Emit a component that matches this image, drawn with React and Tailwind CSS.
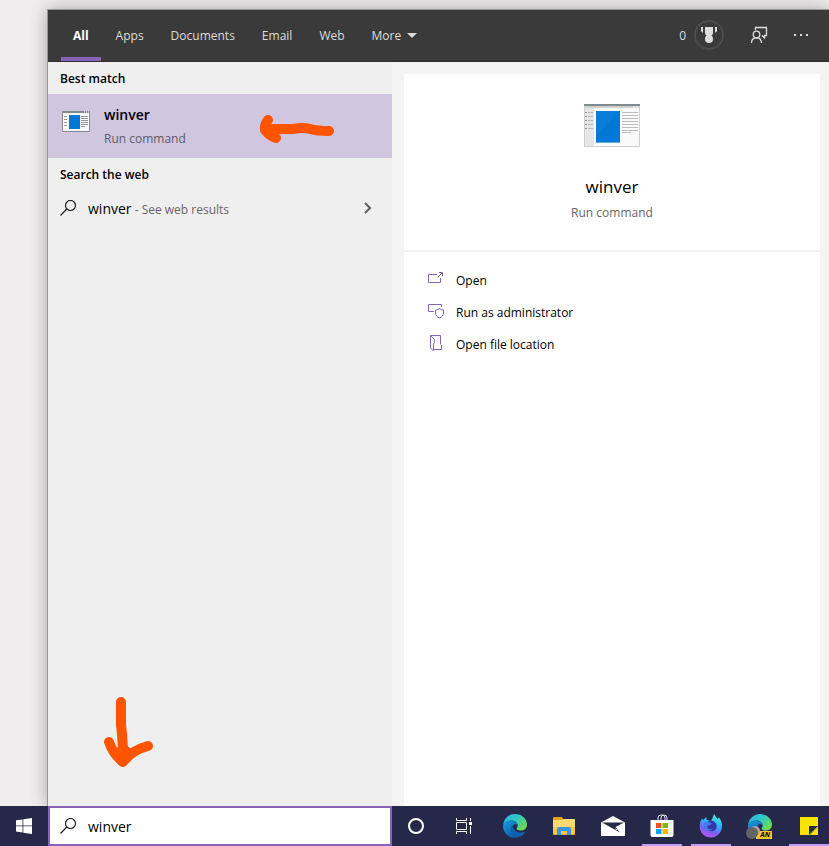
import React, { useState } from 'react';

const tabs = ['All', 'Apps', 'Documents', 'Email', 'Web'];

// Small application window, used for the preview
const AppIcon = () => (
  <svg viewBox="0 0 56 43" className="w-14 h-[43px] shrink-0" aria-hidden="true">
    <rect width="56" height="43" fill="#cfd1d1" />
    <rect x="1" y="4" width="54" height="38" fill="#fafafa" />
    <rect x="1" y="4" width="9" height="38" fill="#e6e6e6" />
    <rect width="56" height="2" fill="#7f8a8c" />
    <path d="M49 2h2v2h-2zM52 2h2v2h-2z" fill="#e5e5e5" />
    <path d="M4 8.5h5M4 12.5h5M4 16.5h5M4 20.5h5M4 24.5h5" stroke="#bdbdbd" />
    <path d="M1 8.5h2M1 12.5h2M1 16.5h2M1 20.5h2M1 24.5h2" stroke="#969696" />
    <rect x="12" y="7" width="24" height="32" fill="#0078d7" />
    <path d="M12 7h24L12 31z" fill="#0a7dd9" />
    <path d="M12 38.5h24" stroke="#67afe5" />
    <path d="M38 8.5h16M38 11.5h16M38 14.5h16M38 17.5h16M38 20.5h16M38 23.5h16M38 26.5h16M38 28.5h9" stroke="#bdbdbd" />
  </svg>
);

const SmallAppIcon = () => (
  <svg viewBox="0 0 28 21" className="w-7 h-[21px] shrink-0" aria-hidden="true">
    <rect width="28" height="21" fill="#858991" />
    <rect x="1" y="2" width="26" height="18" fill="#fafafa" />
    <path d="M22 1h1M24 1h1M26 1h1" stroke="#fff" />
    <path d="M2 5.5h3M2 8.5h3M2 11.5h3M2 14.5h3" stroke="#969696" />
    <rect x="7" y="4" width="11" height="14" fill="#0078d7" />
    <path d="M19 5.5h7M19 7.5h7M19 9.5h7M19 11.5h7M19 13.5h7M19 15.5h4" stroke="#969696" />
  </svg>
);

const SearchIcon = () => (
  <svg viewBox="0 0 16 16" className="w-4 h-4 shrink-0" fill="none" stroke="#222" strokeWidth="1.2" aria-hidden="true">
    <circle cx="10.5" cy="5.5" r="5" />
    <path d="M6.8 9 .5 15.5" />
  </svg>
);

const OpenIcon = () => (
  <svg viewBox="0 0 16 16" className="w-4 h-4" fill="none" stroke="#8764b8" aria-hidden="true">
    <path d="M9 3.5H.5v8h12V7" />
    <path d="m10 6 4.5-4.5M11 1.5h3.5V5" />
  </svg>
);

const AdminIcon = () => (
  <svg viewBox="0 0 16 16" className="w-4 h-4" fill="none" stroke="#8764b8" aria-hidden="true">
    <path d="M6 8.5H.5v-7h13V4" />
    <path d="M11.5 5.5c-1 1-2.500 1.500-4 1.500v3c0 2.500 1.500 4 4 5 2.500-1 4-2.500 4-5V7c-1.500 0-3-.5-4-1.500z" />
  </svg>
);

const FolderIcon = () => (
  <svg viewBox="0 0 16 16" className="w-4 h-4" fill="none" stroke="#8764b8" aria-hidden="true">
    <path d="M2.5.5h10v9l1 1v4H5.5" />
    <path d="M2.5.5v13l3 2V9l.8-1.500V4z" />
  </svg>
);

const actions = [
  { label: 'Open', icon: <OpenIcon /> },
  { label: 'Run as administrator', icon: <AdminIcon /> },
  { label: 'Open file location', icon: <FolderIcon /> },
];

const EdgeIcon = () => (
  <svg viewBox="0 0 24 24" className="w-6 h-6" aria-hidden="true">
    <defs>
      <linearGradient id="edge-top" x1="0" y1="0" x2="1" y2=".7">
        <stop offset="0" stopColor="#2bb5e8" />
        <stop offset=".5" stopColor="#2fc8c5" />
        <stop offset="1" stopColor="#6ddb4c" />
      </linearGradient>
      <linearGradient id="edge-low" x1="0" y1="0" x2=".6" y2="1">
        <stop offset="0" stopColor="#1b9de2" />
        <stop offset="1" stopColor="#0c59a4" />
      </linearGradient>
    </defs>
    <path d="M.2 10.5C1 4.5 6 0 12 0c7 0 12 5 12 10.5 0 4-3 6-6.500 6-2.500 0-4-1-4-2 0-.8 1.200-1.300 1.200-3C14.700 9 12 6.500 8.500 6.500 5 6.500 1.500 8 .2 10.500z" fill="url(#edge-top)" />
    <path d="M.1 11C1 8 4.500 6.300 8.300 6.500c3.500.2 6.200 2.400 6.400 4.800-.8-1-2-1.300-3-1C9 11 8 13.500 8.500 16c.7 4 4 6.500 7.500 7.300C14.500 23.800 13.300 24 12 24 5 24-.5 18 .1 11z" fill="url(#edge-low)" />
    <path d="M11.700 10.300C9 11 7.700 13.500 8 16c.5 4.500 5 7.500 9 6.800 2.500-1 4.500-3 5.500-4.800.2-.5-.2-.8-.6-.5-1.900 1-4.200 1.300-6.200.8-3.500-.8-5.900-3.800-5.500-6 .2-1 .7-1.500 1.500-2z" fill="#1261b0" />
  </svg>
);

const ExplorerIcon = () => (
  <svg viewBox="0 0 22 18" className="w-[22px] h-[18px]" aria-hidden="true">
    <path d="M0 1q0-1 1-1h8l1 2h11q1 0 1 1v15H0z" fill="#e5a11b" />
    <path d="M0 3h9l1-1h11q1 0 1 1v14H0z" fill="#ffd974" />
    <path d="M0 10h22v7H0z" fill="#f8c94e" />
    <path d="M4 18v-6q0-2 2-2h10q2 0 2 2v6h-4v-4H8v4z" fill="#3b97df" />
  </svg>
);

const MailIcon = () => (
  <svg viewBox="0 0 24 20" className="w-6 h-5" aria-hidden="true">
    <path d="M0 6.5 12 0l12 6.5V20H0z" fill="#fff" />
    <path d="M1 6.5h22L14.500 11l4.500 5.500z" fill="#252849" />
    <path d="m14 12.500 3 1-2 .5z" fill="#fff" />
  </svg>
);

const StoreIcon = () => (
  <svg viewBox="0 0 24 24" className="w-6 h-6" aria-hidden="true">
    <path d="M8 7V4q0-3 3-3h1q3 0 3 3v3M11 7V4q0-3 3-3 3 0 3 3v3" fill="none" stroke="#dfe3ee" />
    <path d="M.5 6h23v15q0 2-2 2h-19q-2 0-2-2z" fill="#fff" />
    <path d="M6 9h5.500v5H6z" fill="#f25022" />
    <path d="M12.500 9H18v5h-5.500z" fill="#7fba00" />
    <path d="M6 15h5.500v5H6z" fill="#00a4ef" />
    <path d="M12.500 15H18v5h-5.500z" fill="#ffb900" />
  </svg>
);

const FirefoxIcon = () => (
  <svg viewBox="0 0 24 24" className="w-6 h-6" aria-hidden="true">
    <defs>
      <linearGradient id="fox" x1=".8" y1="0" x2=".4" y2="1">
        <stop offset="0" stopColor="#50f0c8" />
        <stop offset=".4" stopColor="#26b8f5" />
        <stop offset=".75" stopColor="#7b5df8" />
        <stop offset="1" stopColor="#b65bea" />
      </linearGradient>
    </defs>
    <path d="M3 4.500 4.500 6 7 3l1 3 4 1 1.500-3L15 0l3.500 5L20 3.500c2 2.500 3.500 6 3 9.500-.7 6-5 10.500-11 10.500S1 19 .7 13C.5 9.500 1.500 6.500 3 4.500z" fill="url(#fox)" />
    <path d="M7 10c1-3 5-4 8-2.500 3.500 2 3.500 7 .5 9-3 1.800-7 .5-8-2.500z" fill="#3438a5" />
    <path d="M5 9q3-2 8 .5l-2 1.500q-1 1-3 1c0 3 3 4 5.500 2.500-2 3.500-7 2.500-8.500-1z" fill="#4578e8" />
  </svg>
);

// Edge Canary carries a profile badge over its lower left corner
const EdgeCanaryIcon = () => (
  <div className="relative">
    <EdgeIcon />
    <span className="absolute left-2 top-[17px] h-2 w-4 bg-[#f9c22e] pr-0.5 text-right text-[7px] leading-2 font-bold text-black italic">AN</span>
    <span className="absolute left-0.5 top-3 size-[10px] rounded-full bg-[#b7a19c]"></span>
    <span className="absolute -left-0.5 top-[13px] size-3 rounded-full bg-[#626566]"></span>
  </div>
);

const NotesIcon = () => (
  <svg viewBox="0 0 18 18" className="w-[18px] h-[18px]" aria-hidden="true">
    <path d="M0 0h18v18H0z" fill="#ffe300" />
    <path d="M9 9h9v9H9z" fill="#252849" />
    <path d="M18 9v1l-8 8H9z" fill="#ffe300" />
    <path d="M18 10v8h-8z" fill="#ffe300" />
  </svg>
);

const pinned = [
  { name: 'Edge', icon: <EdgeIcon /> },
  { name: 'File Explorer', icon: <ExplorerIcon /> },
  { name: 'Mail', icon: <MailIcon /> },
  { name: 'Store', icon: <StoreIcon />, open: true },
  { name: 'Firefox', icon: <FirefoxIcon />, open: true },
  { name: 'Edge Canary', icon: <EdgeCanaryIcon /> },
  { name: 'Sticky Notes', icon: <NotesIcon />, open: true },
];

const Header = () => {
  const [active, setActive] = useState('All');

  return (
    <header className="flex h-13 shrink-0 items-stretch justify-between bg-[#3a3a3a] border-b border-[#302c31] text-[#dcdcdc]">
      <nav className="flex gap-[3px] pl-[13px]">
        {tabs.map((tab) => (
          <button
            key={tab}
            onClick={() => setActive(tab)}
            className={`border-b-4 px-3 pt-1 ${
              active === tab ? 'border-[#8764b8] font-bold text-white' : 'border-transparent'
            }`}
          >
            {tab}
          </button>
        ))}
        <button className="flex items-center gap-1.5 px-3">
          More
          <svg viewBox="0 0 10 5" className="w-2.5 h-[5px]" fill="currentColor" aria-hidden="true">
            <path d="M0 0h10L5 5z" />
          </svg>
        </button>
      </nav>

      <div className="flex items-center pr-[21px] pb-0.5">
        <span className="pr-2 pt-0.5">0</span>
        <button aria-label="Rewards" className="mr-[26px] flex size-[30px] items-center justify-center rounded-full border-2 border-[#4c4c4c]">
          <svg viewBox="0 0 16 17" className="w-4 h-[17px] shrink-0" fill="#dedede" aria-hidden="true">
            <path d="M4 1h8v6q0 2-2 3H6Q4 9 4 7z" />
            <circle cx="8" cy="13" r="4" />
            <path d="M0 1h2v6L0 5zM14 1h2v4l-2 2z" />
          </svg>
        </button>
        <button aria-label="Feedback" className="mr-[26px]">
          <svg viewBox="0 0 18 18" className="w-[18px] h-[18px]" fill="none" stroke="#dedede" strokeWidth="1.3" aria-hidden="true">
            <path d="M5.500 4V1.500h11v8h-2v2.500L12 9.500" />
            <circle cx="6.500" cy="8.500" r="3.300" />
            <path d="M1.500 17c0-3.500 2-5.200 5-5.200s5 1.700 5 5.200" />
          </svg>
        </button>
        <button aria-label="Options">
          <svg viewBox="0 0 14 4" className="w-3.5 h-1" fill="#dedede" aria-hidden="true">
            <path d="M0 1h2v2H0zM6 1h2v2H6zM12 1h2v2h-2z" />
          </svg>
        </button>
      </div>
    </header>
  );
};

const Results = () => (
  <section className="relative flex w-86 shrink-0 flex-col bg-[#efefef]">
    <h2 className="h-8 pl-3 pt-px leading-8 font-semibold">Best match</h2>
    <button className="flex h-16 items-start bg-[#d0c6df] pl-3.5 pt-[11px] text-left">
      <span className="pt-1.5">
        <SmallAppIcon />
      </span>
      <span className="pl-3.5">
        <span className="block text-[14px] leading-5 font-semibold">winver</span>
        <span className="block pt-1 leading-5 text-[#5f5a66]">Run command</span>
      </span>
    </button>
    <h2 className="h-8 pl-3 pt-px leading-8 font-semibold">Search the web</h2>
    <button className="flex h-10 items-center pl-3 pr-5 pb-1 text-left">
      <SearchIcon />
      <span className="flex-1 pl-3">
        <span className="text-[14px]">winver</span>
        <span className="text-[#666]"> - See web results</span>
      </span>
      <svg viewBox="0 0 8 12" className="w-2 h-3" fill="none" stroke="#5d5d5d" strokeWidth="2" aria-hidden="true">
        <path d="m1 1 5 5-5 5" />
      </svg>
    </button>

    {/* Hand-drawn arrows */}
    <svg viewBox="0 0 76 32" className="absolute left-[211px] top-[50px] w-19 h-8" fill="none" stroke="#ff5500" strokeWidth="10" strokeLinecap="round" strokeLinejoin="round" aria-hidden="true">
      <path d="M70 19Q58 19 51 17 44 15 34 17H8M9 8Q5 13 6 18q5 6 11 8" />
      <path d="M8 16h9v8z" fill="#ff5500" strokeWidth="2" />
    </svg>
    <svg viewBox="0 0 52 72" className="absolute bottom-[38px] left-[55px] w-13 h-18" fill="none" stroke="#ff5500" strokeWidth="10" strokeLinecap="round" strokeLinejoin="round" aria-hidden="true">
      <path d="M18 6v23q2 15 2 34M6 46q4 12 14 20Q29 54 45 50" />
      <path d="m12 54 8 11 10-9-8-7z" fill="#ff5500" strokeWidth="2" />
    </svg>
  </section>
);

const Preview = () => (
  <section className="ml-3 mr-[9px] mt-3 flex flex-1 flex-col bg-white">
    <div className="flex h-[178px] flex-col items-center border-b-2 border-[#f2f2f2] pt-[30px]">
      <AppIcon />
      <h1 className="pt-7 text-[17px] leading-6">winver</h1>
      <p className="pt-1 leading-5 text-[#666]">Run command</p>
    </div>
    <ul className="pt-3">
      {actions.map((action) => (
        <li key={action.label}>
          <button className="flex h-8 w-full items-center pl-6 text-left">
            <span className="pb-0.5">{action.icon}</span>
            <span className="pl-3 pt-0.5">{action.label}</span>
          </button>
        </li>
      ))}
    </ul>
  </section>
);

const Taskbar = () => {
  const [query, setQuery] = useState('winver');

  return (
    <footer className="relative flex h-10 shrink-0 bg-[#252849]">
      <button aria-label="Start" className="flex w-12 items-center justify-center">
        <svg viewBox="0 0 16 16" className="w-4 h-4" fill="#fff" aria-hidden="true">
          <path d="M0 2.300 6.500 1.400V7.500H0zM7.300 1.300 16 0v7.500H7.300zM0 8.300h6.500v6.200L0 13.600zM7.300 8.300H16V16l-8.700-1.300z" />
        </svg>
      </button>
      <label className="flex w-86 items-center border-2 border-[#8764b8] bg-white pl-2.5">
        <SearchIcon />
        <input
          type="text"
          aria-label="Search"
          value={query}
          onChange={(e) => setQuery(e.target.value)}
          className="ml-3 min-w-0 flex-1 text-[14px] text-black outline-none"
        />
      </label>
      <button aria-label="Cortana" className="flex w-12 items-center justify-center">
        <span className="size-4 rounded-full border-2 border-white"></span>
      </button>
      <button aria-label="Task view" className="mr-[7px] flex w-12 items-center justify-center">
        <svg viewBox="0 0 16 16" className="w-4 h-4" fill="none" stroke="#fff" aria-hidden="true">
          <path d="M.5 0v2.500h10V0M.5 4.500h10v7H.5zM.5 16v-2.500h10V16M14.500 0v3M14.500 8v8" />
          <path d="M13 4h3v3h-3z" fill="#fff" stroke="none" />
        </svg>
      </button>
      <div className="flex gap-[9px]">
        {pinned.map((app) => (
          <button
            key={app.name}
            aria-label={app.name}
            className={`flex w-10 items-center justify-center border-b-2 pt-0.5 ${
              app.open ? 'border-[#c19bfa]' : 'border-transparent'
            }`}
          >
            {app.icon}
          </button>
        ))}
      </div>
    </footer>
  );
};

export default function App() {
  return (
    <div className="flex min-h-screen flex-col overflow-hidden bg-[#efedee] font-['Open_Sans','Noto_Sans',sans-serif] text-[12px] text-black">
      <main className="ml-[47px] mt-[9px] flex flex-1 flex-col border-l border-t border-[#969696] bg-[#f4f4f4] shadow-[0_0_16px_rgba(0,0,0,0.3)]">
        <Header />
        <div className="flex flex-1">
          <Results />
          <Preview />
        </div>
      </main>
      <Taskbar />
    </div>
  );
}
